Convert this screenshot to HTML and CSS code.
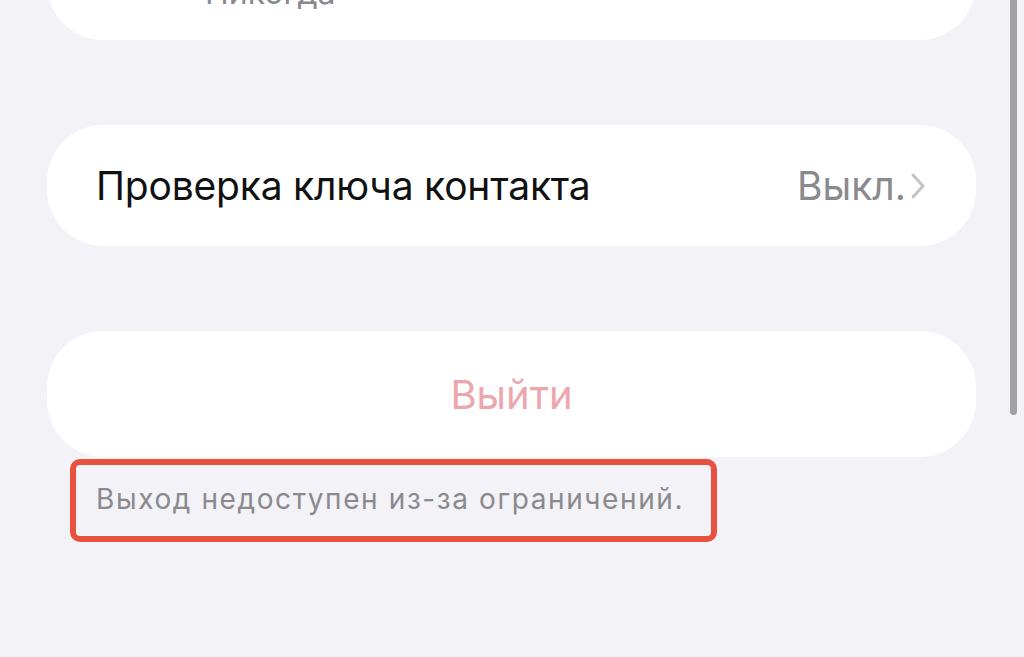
FILE: index.html
```html
<!DOCTYPE html>
<html lang="ru">

<head>
    <meta charset="UTF-8">
    <meta name="viewport" content="width=device-width, initial-scale=1.0">
    <title>Настройки</title>
    <link rel="stylesheet" href="styles.css">
</head>

<body>
    <div class="list">
        <div class="card card-top">
            <span class="top-text">Никогда</span>
        </div>
        <div class="card row">
            <span class="row-title">Проверка ключа контакта</span>
            <span class="row-value">Выкл.
                <svg class="chevron" width="16" height="28" viewBox="0 0 16 28">
                    <path d="M3 3 L13 14 L3 25" fill="none" stroke="#c4c4c7" stroke-width="3" stroke-linecap="round" stroke-linejoin="round" />
                </svg>
            </span>
        </div>
        <div class="card logout">
            <span class="logout-text">Выйти</span>
        </div>
        <div class="note">Выход недоступен из-за ограничений.</div>
    </div>
    <div class="scrollbar"></div>
</body>

</html>
```

FILE: styles.css
```css
* {
    margin: 0;
    padding: 0;
    box-sizing: border-box;
}

body {
    background-color: #f2f2f7;
    font-family: Inter, "Noto Sans", sans-serif;
    height: 657px;
    overflow: hidden;
    position: relative;
}

.list {
    display: flex;
    flex-direction: column;
    padding: 0 48px 0 47px;
}

.card {
    background-color: #ffffff;
    border-radius: 56px;
}

.card-top {
    height: 120px;
    margin-top: -80px;
    margin-bottom: 85px;
    display: flex;
    align-items: flex-end;
    padding: 0 0 31px 158px;
}

.top-text {
    font-size: 32px;
    color: #8a8a8e;
    line-height: 1;
}

.row {
    height: 121px;
    display: flex;
    align-items: center;
    justify-content: space-between;
    padding: 0 50px 0 49px;
    margin-bottom: 85px;
}

.row-title {
    font-size: 39px;
    color: #111111;
    letter-spacing: -0.2px;
}

.row-value {
    font-size: 39px;
    color: #8a8a8e;
    display: flex;
    align-items: center;
    gap: 4px;
}

.logout {
    height: 126px;
    display: flex;
    align-items: center;
    justify-content: center;
}

.logout-text {
    font-size: 40px;
    color: #eca6ae;
}

.note {
    margin: 2px 0 0 23px;
    width: 647px;
    height: 83px;
    border: 6px solid #e8503f;
    border-radius: 10px;
    font-size: 28px;
    color: #8a8a8e;
    display: flex;
    align-items: center;
    padding: 0 0 4px 20px;
    letter-spacing: 1.6px;
}

.scrollbar {
    position: absolute;
    top: -10px;
    left: 1010px;
    width: 7px;
    height: 425px;
    border-radius: 4px;
    background-color: #a1a1a3;
}
```
